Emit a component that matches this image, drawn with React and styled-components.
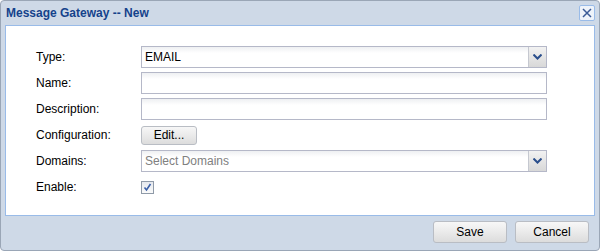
import styled, { createGlobalStyle } from "styled-components";

const GlobalStyle = createGlobalStyle`
  body {
    margin: 0;
    font-family: "Liberation Sans", Arial, sans-serif;
    font-size: 12px;
  }
`;

const Window = styled.div`
  width: 600px;
  height: 251px;
  box-sizing: border-box;
  background: #ced9e7;
  border: 1px solid #9aa6b6;
  border-radius: 4px;
  display: flex;
  flex-direction: column;
`;

const Header = styled.div`
  height: 24px;
  display: flex;
  align-items: center;
  justify-content: space-between;
  padding: 0 4px 0 5px;
`;

const Title = styled.span`
  color: #15428b;
  font-weight: bold;
  font-size: 12px;
`;

const CloseButton = styled.div`
  width: 14px;
  height: 14px;
  border: 1px solid #99bbe8;
  border-radius: 2px;
  background: #eef3fa;
  display: flex;
  align-items: center;
  justify-content: center;
`;

const Body = styled.div`
  margin: 0 4px;
  height: 191px;
  box-sizing: border-box;
  background: #fff;
  border: 1px solid #99bbe8;
  padding: 20px 0 0 30px;
`;

const Row = styled.div`
  display: flex;
  align-items: center;
  height: 22px;
  margin-bottom: 4px;
`;

const Label = styled.label`
  width: 105px;
  color: #000;
`;

const Field = styled.div`
  width: 406px;
  height: 22px;
  box-sizing: border-box;
  border: 1px solid #b5b8c8;
  background: linear-gradient(#eef0f2, #fff 6px);
  display: flex;
  align-items: center;
  color: ${(p) => (p.$placeholder ? "#808080" : "#000")};
`;

const FieldText = styled.span`
  flex: 1;
  padding-left: 3px;
`;

const Trigger = styled.div`
  width: 17px;
  height: 20px;
  border-left: 1px solid #c5c8d0;
  background: linear-gradient(#f2f2f2, #d8d8d8);
  display: flex;
  align-items: center;
  justify-content: center;
`;

const Button = styled.button`
  width: ${(p) => p.$w}px;
  height: ${(p) => p.$h}px;
  padding: 0;
  border: 1px solid #b9bdc4;
  border-radius: 3px;
  background: linear-gradient(#f7f7f7, #e9e9e9 55%, #dcdcdc);
  font-family: "Liberation Sans", Arial, sans-serif;
  font-size: 12px;
  color: #000;
`;

const Check = styled.div`
  width: 11px;
  height: 11px;
  border: 1px solid #8f9aa8;
  background: linear-gradient(#e6e9ee, #fafafa);
  display: flex;
  align-items: center;
  justify-content: center;
`;

const Footer = styled.div`
  flex: 1;
  display: flex;
  justify-content: flex-end;
  align-items: center;
  gap: 8px;
  padding: 0 10px 2px 0;
`;

const Chevron = () => (
  <svg width="9" height="6" viewBox="0 0 9 6">
    <path d="M0.5 0.5 L4.5 4.5 L8.5 0.5" fill="none" stroke="#2b4f8c" strokeWidth="2" />
  </svg>
);

const Combo = ({ value, placeholder }) => (
  <Field $placeholder={placeholder}>
    <FieldText>{value}</FieldText>
    <Trigger>
      <Chevron />
    </Trigger>
  </Field>
);

export default function App() {
  return (
    <>
      <GlobalStyle />
      <Window>
        <Header>
          <Title>Message Gateway -- New</Title>
          <CloseButton>
            <svg width="10" height="10" viewBox="0 0 10 10">
              <path d="M1 1 L9 9 M9 1 L1 9" stroke="#3a5a96" strokeWidth="1.5" />
            </svg>
          </CloseButton>
        </Header>
        <Body>
          <Row>
            <Label>Type:</Label>
            <Combo value="EMAIL" />
          </Row>
          <Row>
            <Label>Name:</Label>
            <Field />
          </Row>
          <Row>
            <Label>Description:</Label>
            <Field />
          </Row>
          <Row>
            <Label>Configuration:</Label>
            <Button $w={56} $h={19}>Edit...</Button>
          </Row>
          <Row>
            <Label>Domains:</Label>
            <Combo value="Select Domains" placeholder />
          </Row>
          <Row>
            <Label>Enable:</Label>
            <Check>
              <svg width="9" height="9" viewBox="0 0 9 9">
                <path d="M1.5 4.5 L3.5 7 L7.5 1" fill="none" stroke="#3a5fa8" strokeWidth="1.6" />
              </svg>
            </Check>
          </Row>
        </Body>
        <Footer>
          <Button $w={74} $h={22}>Save</Button>
          <Button $w={74} $h={22}>Cancel</Button>
        </Footer>
      </Window>
    </>
  );
}
